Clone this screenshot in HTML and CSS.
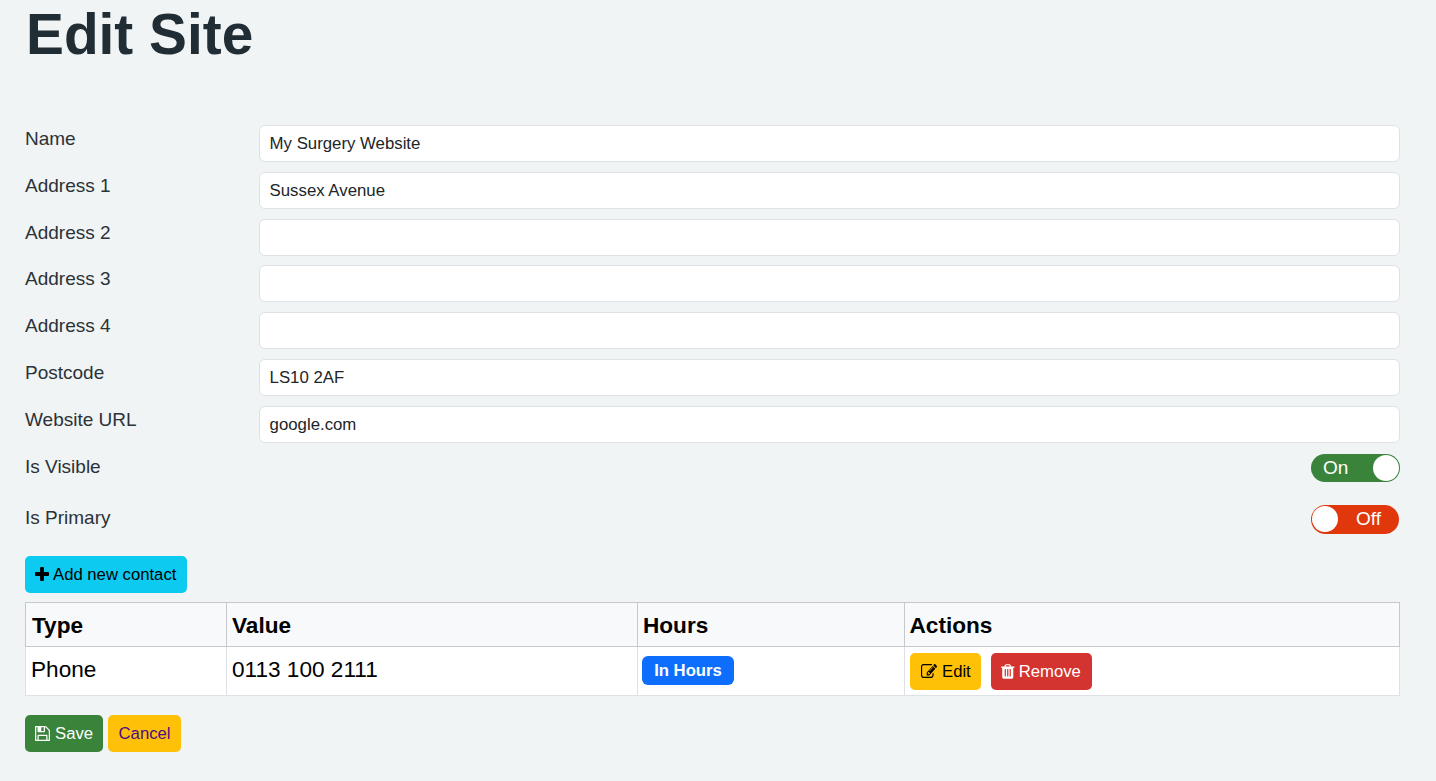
FILE: index.html
```html
<!DOCTYPE html>
<html lang="en">
<head>
<meta charset="utf-8">
<title>Edit Site</title>
<link rel="stylesheet" href="styles.css">
</head>
<body>
<main class="page">
  <h1 class="title">Edit Site</h1>
  <form class="site-form">
    <label class="field-label" for="f1">Name</label>
    <input class="field-input" id="f1" type="text" value="My Surgery Website">
    <label class="field-label" for="f2">Address 1</label>
    <input class="field-input" id="f2" type="text" value="Sussex Avenue">
    <label class="field-label" for="f3">Address 2</label>
    <input class="field-input" id="f3" type="text">
    <label class="field-label" for="f4">Address 3</label>
    <input class="field-input" id="f4" type="text">
    <label class="field-label" for="f5">Address 4</label>
    <input class="field-input" id="f5" type="text">
    <label class="field-label" for="f6">Postcode</label>
    <input class="field-input" id="f6" type="text" value="LS10 2AF">
    <label class="field-label" for="f7">Website URL</label>
    <input class="field-input" id="f7" type="text" value="google.com">
    <span class="field-label">Is Visible</span>
    <div class="toggle-cell"><span class="toggle toggle-on"><span class="toggle-text">On</span><span class="knob"></span></span></div>
    <span class="field-label">Is Primary</span>
    <div class="toggle-cell toggle-cell-last"><span class="toggle toggle-off"><span class="knob"></span><span class="toggle-text">Off</span></span></div>
  </form>

  <button class="btn btn-info add-btn" type="button">
    <svg class="icon icon-plus" viewBox="192 128 1408 1408"><path d="M1600 736v192q0 40-28 68t-68 28h-416v416q0 40-28 68t-68 28h-192q-40 0-68-28t-28-68v-416h-416q-40 0-68-28t-28-68v-192q0-40 28-68t68-28h416v-416q0-40 28-68t68-28h192q40 0 68 28t28 68v416h416q40 0 68 28t28 68z"/></svg>
    <span class="btn-text">Add new contact</span>
  </button>

  <table class="contacts">
    <colgroup><col class="col-type"><col class="col-value"><col class="col-hours"><col></colgroup>
    <thead>
      <tr><th>Type</th><th class="th-value">Value</th><th class="th-hours">Hours</th><th class="th-actions">Actions</th></tr>
    </thead>
    <tbody>
      <tr>
        <td>Phone</td>
        <td>0113 100 2111</td>
        <td class="td-badge"><span class="badge">In Hours</span></td>
        <td class="td-actions">
          <div class="action-row">
            <button class="btn btn-warning" type="button">
              <svg class="icon icon-edit" viewBox="0 128 1792 1408" preserveAspectRatio="none"><path d="M888 1184l116-116-152-152-116 116v56h96v96h56zm440-720q-16-16-33 1l-350 350q-17 17-1 33t33-1l350-350q17-17 1-33zm80 594v190q0 119-84.500 203.500t-203.500 84.500h-832q-119 0-203.500-84.500t-84.500-203.500v-832q0-119 84.500-203.500t203.500-84.500h832q63 0 117 25 15 7 18 23 3 17-9 29l-49 49q-14 14-32 8-23-6-45-6h-832q-66 0-113 47t-47 113v832q0 66 47 113t113 47h832q66 0 113-47t47-113v-126q0-13 9-22l64-64q15-15 35-7t20 29zm-96-738l288 288-672 672h-288v-288zm444 132l-92 92-288-288 92-92q28-28 68-28t68 28l152 152q28 28 28 68t-28 68z"/></svg>
              <span class="btn-text">Edit</span>
            </button>
            <button class="btn btn-danger" type="button">
              <svg class="icon icon-trash" viewBox="192 128 1408 1536"><path d="M704 1376v-704q0-14-9-23t-23-9h-64q-14 0-23 9t-9 23v704q0 14 9 23t23 9h64q14 0 23-9t9-23zm256 0v-704q0-14-9-23t-23-9h-64q-14 0-23 9t-9 23v704q0 14 9 23t23 9h64q14 0 23-9t9-23zm256 0v-704q0-14-9-23t-23-9h-64q-14 0-23 9t-9 23v704q0 14 9 23t23 9h64q14 0 23-9t9-23zm-544-992h448l-48-117q-7-9-17-11h-317q-10 2-17 11zm928 32v64q0 14-9 23t-23 9h-96v948q0 83-47 143.500t-113 60.500h-832q-66 0-113-58.500t-47-141.500v-952h-96q-14 0-23-9t-9-23v-64q0-14 9-23t23-9h309l70-167q15-37 54-63t79-26h320q40 0 79 26t54 63l70 167h309q14 0 23 9t9 23z"/></svg>
              <span class="btn-text">Remove</span>
            </button>
          </div>
        </td>
      </tr>
    </tbody>
  </table>

  <div class="form-actions">
    <button class="btn btn-success" type="button">
      <svg class="icon icon-save" viewBox="128 128 1536 1536"><path d="M512 1536h768v-384h-768v384zm896 0h128v-896q0-14-10-38.500t-20-34.500l-281-281q-10-10-34-20t-39-10v416q0 40-28 68t-68 28h-576q-40 0-68-28t-28-68v-416h-128v1280h128v-416q0-40 28-68t68-28h832q40 0 68 28t28 68v416zm-384-928v-320q0-13-9.500-22.500t-22.500-9.500h-192q-13 0-22.500 9.500t-9.500 22.500v320q0 13 9.500 22.500t22.500 9.500h192q13 0 22.500-9.500t9.500-22.500zm640 32v928q0 40-28 68t-68 28h-1344q-40 0-68-28t-28-68v-1344q0-40 28-68t68-28h928q40 0 88 20t76 48l280 280q28 28 48 76t20 88z"/></svg>
      <span class="btn-text">Save</span>
    </button>
    <button class="btn btn-cancel" type="button"><span class="btn-text">Cancel</span></button>
  </div>
</main>
</body>
</html>
```

FILE: styles.css
```css
* { box-sizing: border-box; }
html, body { margin: 0; padding: 0; }
body {
  background: #f0f4f5;
  color: #212d35;
  font-family: "Liberation Sans", Arial, sans-serif;
  font-size: 16.7px;
  line-height: 1.5;
}
.page { padding: 0 36px 0 25px; }
.title {
  margin: 0;
  padding: 1px 0 0 1px;
  height: 125px;
  font-size: 56.8px;
  line-height: 67px;
  font-weight: 700;
}
.site-form {
  display: grid;
  grid-template-columns: 234px 1fr;
  grid-template-rows: repeat(7, 36.8px) 41.2px 41.2px;
  row-gap: 10px;
}
.field-label {
  font-size: 19px;
  line-height: 28px;
  color: #2b3238;
}
.field-input {
  width: 100%;
  height: 37px;
  padding: 1px 10px 0 9.6px;
  border: 1px solid #dee2e6;
  border-radius: 6px;
  background: #fff;
  color: #212529;
  font: 16.8px "Liberation Sans", Arial, sans-serif;
}
.toggle-cell { display: flex; justify-content: flex-end; align-items: flex-start; }
.toggle-cell-last { padding-right: 1px; }
.toggle {
  display: flex;
  align-items: center;
  justify-content: space-between;
  width: 89px;
  height: 28px;
  padding: 0 1px;
  border-radius: 15px;
  color: #fff;
  font-size: 19px;
  line-height: 1;
}
.toggle-on { background: #3a833a; margin-top: 1.4px; padding-left: 12px; }
.toggle-off { background: #e0380c; margin-top: 1.2px; height: 29px; width: 88px; padding-right: 18px; }
.toggle-off .toggle-text { margin-bottom: 2px; }
.knob {
  width: 26px;
  height: 26px;
  border-radius: 50%;
  background: #fff;
}
.add-btn { display: flex; margin-top: 11px; padding: 0 11px 0 10px; gap: 4px; }
.btn {
  display: inline-flex;
  align-items: center;
  height: 37px;
  border: 0;
  border-radius: 5px;
  font: 16.7px "Liberation Sans", Arial, sans-serif;
  white-space: nowrap;
}
.btn-text { padding-top: 2px; }
.icon { fill: currentColor; flex: none; }
.icon-plus { width: 14px; height: 14px; }
.icon-edit { width: 16px; height: 14px; }
.icon-trash { width: 13.5px; height: 15px; }
.icon-save { width: 15px; height: 15px; }
.btn-info { background: #0dcaf0; color: #000; }
.btn-warning { background: #ffc107; color: #000; padding: 0 10px 0 11px; gap: 5px; }
.btn-danger { background: #d3342f; color: #fff; padding: 0 11px 0 10.5px; gap: 4px; }
.btn-success { background: #3a833a; color: #fff; padding: 0 10px; gap: 5px; }
.btn-cancel { background: #ffc107; color: #4b0b8c; padding: 0 10.5px; }
.contacts {
  width: 100%;
  margin-top: 9px;
  border-collapse: collapse;
  table-layout: fixed;
  background: #fff;
  color: #000;
  font-size: 22.6px;
  line-height: 1.5;
}
.col-type { width: 201px; }
.col-value { width: 411px; }
.col-hours { width: 267px; }
.contacts th {
  height: 44px;
  padding: 2px 6px 0;
  background: #f8f9fa;
  border: 1px solid #c6c8cc;
  text-align: left;
  font-weight: 700;
}
.contacts th.th-value { padding-left: 5px; }
.contacts th.th-hours { padding-left: 5px; }
.contacts th.th-actions { padding-left: 4.5px; }
.contacts td {
  height: 49px;
  padding: 5.8px 5px 0;
  border: 1px solid #dee2e6;
  border-top-color: #c6c8cc;
  vertical-align: top;
}
.contacts td.td-badge { padding: 9px 4px 0; }
.contacts td.td-actions { padding: 6px 5px 0; }
.action-row { display: flex; gap: 10px; }
.badge {
  display: inline-block;
  width: 92px;
  height: 29px;
  background: #0d6efd;
  border-radius: 6px;
  color: #fff;
  font-size: 16.7px;
  font-weight: 700;
  line-height: 29px;
  text-align: center;
  vertical-align: top;
}
.form-actions { display: flex; gap: 5px; margin-top: 19px; }
```
